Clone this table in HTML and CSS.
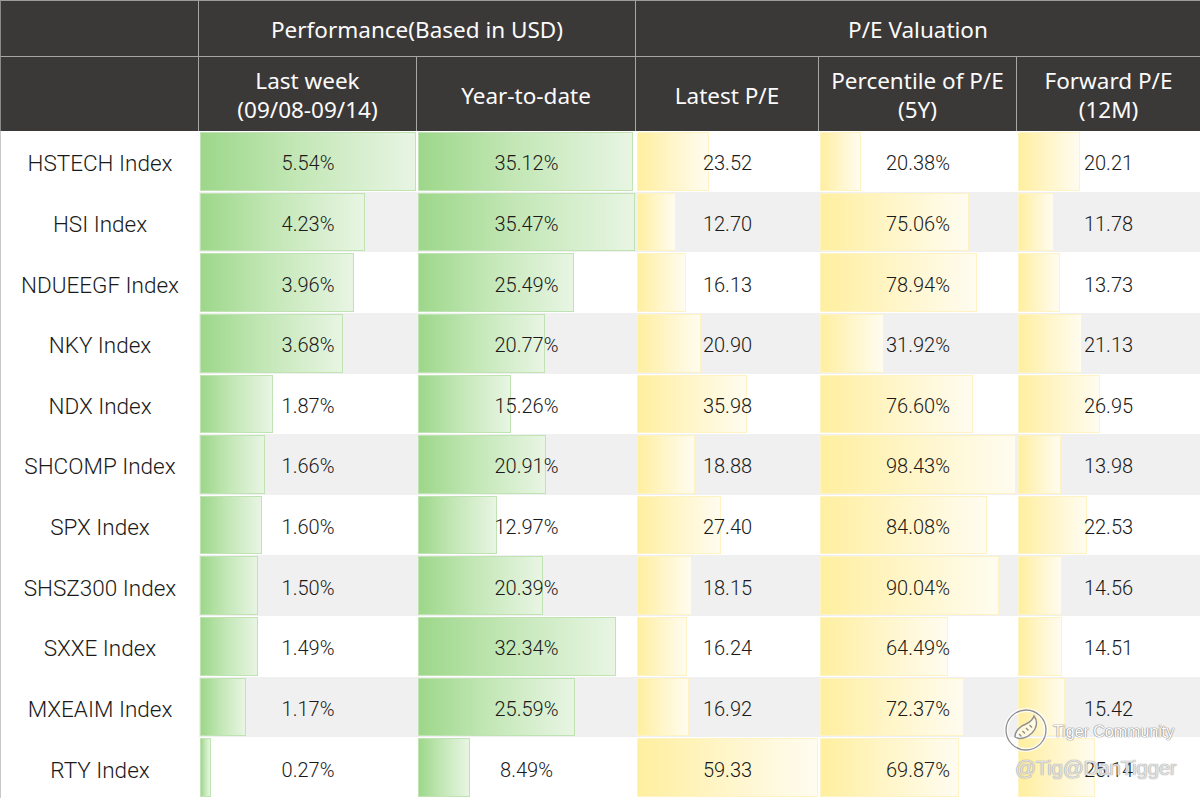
FILE: index.html
```html
<!DOCTYPE html>
<html>
<head>
<meta charset="utf-8">
<link rel="stylesheet" href="styles.css">
</head>
<body>
<div class="sheet">
  <div class="hd r1 c0"></div>
  <div class="hd r1 span2">Performance(Based in USD)</div>
  <div class="hd r1 span3 last">P/E Valuation</div>
  <div class="hd r2 c0"></div>
  <div class="hd r2">Last week<br>(09/08-09/14)</div>
  <div class="hd r2">Year-to-date</div>
  <div class="hd r2">Latest P/E</div>
  <div class="hd r2">Percentile of P/E<br>(5Y)</div>
  <div class="hd r2 last">Forward P/E<br>(12M)</div>

  <div class="row">
    <div class="name">HSTECH Index</div>
    <div class="cell"><span class="bar g" style="width:100%"></span><span class="val">5.54%</span></div>
    <div class="cell"><span class="bar g" style="width:99.01%"></span><span class="val">35.12%</span></div>
    <div class="cell"><span class="bar y" style="width:39.64%"></span><span class="val">23.52</span></div>
    <div class="cell"><span class="bar y" style="width:20.71%"></span><span class="val">20.38%</span></div>
    <div class="cell"><span class="bar y" style="width:34.06%"></span><span class="val">20.21</span></div>
  </div>
  <div class="row alt">
    <div class="name">HSI Index</div>
    <div class="cell"><span class="bar g" style="width:76.35%"></span><span class="val">4.23%</span></div>
    <div class="cell"><span class="bar g" style="width:100%"></span><span class="val">35.47%</span></div>
    <div class="cell"><span class="bar y" style="width:21.41%"></span><span class="val">12.70</span></div>
    <div class="cell"><span class="bar y" style="width:76.26%"></span><span class="val">75.06%</span></div>
    <div class="cell"><span class="bar y" style="width:19.86%"></span><span class="val">11.78</span></div>
  </div>
  <div class="row">
    <div class="name">NDUEEGF Index</div>
    <div class="cell"><span class="bar g" style="width:71.48%"></span><span class="val">3.96%</span></div>
    <div class="cell"><span class="bar g" style="width:71.86%"></span><span class="val">25.49%</span></div>
    <div class="cell"><span class="bar y" style="width:27.19%"></span><span class="val">16.13</span></div>
    <div class="cell"><span class="bar y" style="width:80.20%"></span><span class="val">78.94%</span></div>
    <div class="cell"><span class="bar y" style="width:23.14%"></span><span class="val">13.73</span></div>
  </div>
  <div class="row alt">
    <div class="name">NKY Index</div>
    <div class="cell"><span class="bar g" style="width:66.43%"></span><span class="val">3.68%</span></div>
    <div class="cell"><span class="bar g" style="width:58.56%"></span><span class="val">20.77%</span></div>
    <div class="cell"><span class="bar y" style="width:35.23%"></span><span class="val">20.90</span></div>
    <div class="cell"><span class="bar y" style="width:32.43%"></span><span class="val">31.92%</span></div>
    <div class="cell"><span class="bar y" style="width:35.61%"></span><span class="val">21.13</span></div>
  </div>
  <div class="row">
    <div class="name">NDX Index</div>
    <div class="cell"><span class="bar g" style="width:33.75%"></span><span class="val">1.87%</span></div>
    <div class="cell"><span class="bar g" style="width:43.02%"></span><span class="val">15.26%</span></div>
    <div class="cell"><span class="bar y" style="width:60.64%"></span><span class="val">35.98</span></div>
    <div class="cell"><span class="bar y" style="width:77.82%"></span><span class="val">76.60%</span></div>
    <div class="cell"><span class="bar y" style="width:45.42%"></span><span class="val">26.95</span></div>
  </div>
  <div class="row alt">
    <div class="name">SHCOMP Index</div>
    <div class="cell"><span class="bar g" style="width:29.96%"></span><span class="val">1.66%</span></div>
    <div class="cell"><span class="bar g" style="width:58.95%"></span><span class="val">20.91%</span></div>
    <div class="cell"><span class="bar y" style="width:31.82%"></span><span class="val">18.88</span></div>
    <div class="cell"><span class="bar y" style="width:100%"></span><span class="val">98.43%</span></div>
    <div class="cell"><span class="bar y" style="width:23.56%"></span><span class="val">13.98</span></div>
  </div>
  <div class="row">
    <div class="name">SPX Index</div>
    <div class="cell"><span class="bar g" style="width:28.88%"></span><span class="val">1.60%</span></div>
    <div class="cell"><span class="bar g" style="width:36.57%"></span><span class="val">12.97%</span></div>
    <div class="cell"><span class="bar y" style="width:46.18%"></span><span class="val">27.40</span></div>
    <div class="cell"><span class="bar y" style="width:85.42%"></span><span class="val">84.08%</span></div>
    <div class="cell"><span class="bar y" style="width:37.97%"></span><span class="val">22.53</span></div>
  </div>
  <div class="row alt">
    <div class="name">SHSZ300 Index</div>
    <div class="cell"><span class="bar g" style="width:27.08%"></span><span class="val">1.50%</span></div>
    <div class="cell"><span class="bar g" style="width:57.49%"></span><span class="val">20.39%</span></div>
    <div class="cell"><span class="bar y" style="width:30.59%"></span><span class="val">18.15</span></div>
    <div class="cell"><span class="bar y" style="width:91.48%"></span><span class="val">90.04%</span></div>
    <div class="cell"><span class="bar y" style="width:24.54%"></span><span class="val">14.56</span></div>
  </div>
  <div class="row">
    <div class="name">SXXE Index</div>
    <div class="cell"><span class="bar g" style="width:26.90%"></span><span class="val">1.49%</span></div>
    <div class="cell"><span class="bar g" style="width:91.18%"></span><span class="val">32.34%</span></div>
    <div class="cell"><span class="bar y" style="width:27.37%"></span><span class="val">16.24</span></div>
    <div class="cell"><span class="bar y" style="width:65.52%"></span><span class="val">64.49%</span></div>
    <div class="cell"><span class="bar y" style="width:24.46%"></span><span class="val">14.51</span></div>
  </div>
  <div class="row alt">
    <div class="name">MXEAIM Index</div>
    <div class="cell"><span class="bar g" style="width:21.12%"></span><span class="val">1.17%</span></div>
    <div class="cell"><span class="bar g" style="width:72.15%"></span><span class="val">25.59%</span></div>
    <div class="cell"><span class="bar y" style="width:28.52%"></span><span class="val">16.92</span></div>
    <div class="cell"><span class="bar y" style="width:73.52%"></span><span class="val">72.37%</span></div>
    <div class="cell"><span class="bar y" style="width:25.99%"></span><span class="val">15.42</span></div>
  </div>
  <div class="row">
    <div class="name">RTY Index</div>
    <div class="cell"><span class="bar g" style="width:4.87%"></span><span class="val">0.27%</span></div>
    <div class="cell"><span class="bar g" style="width:23.94%"></span><span class="val">8.49%</span></div>
    <div class="cell"><span class="bar y" style="width:100%"></span><span class="val">59.33</span></div>
    <div class="cell"><span class="bar y" style="width:70.98%"></span><span class="val">69.87%</span></div>
    <div class="cell"><span class="bar y" style="width:42.37%"></span><span class="val">25.14</span></div>
  </div>
</div>

<div class="watermark">
  <div class="wm-top">
    <svg class="wm-logo" width="46" height="46" viewBox="0 0 46 46">
      <circle cx="23" cy="23" r="20" fill="none" stroke="#ffffff" stroke-width="4" opacity="0.85"/>
      <circle cx="23" cy="23" r="20" fill="none" stroke="#8f8f8f" stroke-width="1.3"/>
      <path d="M12 30 C12 24 17 19 23 17 C27 15 30 12 31 9 C35 14 34 21 29 26 C24 31 17 33 12 30 Z" fill="rgba(255,255,255,0.6)" stroke="#8f8f8f" stroke-width="1.4"/>
      <path d="M16 27 L18.5 29.5 M19.5 24 L22 26.5 M23 21 L25.5 23.5 M26.5 18 L29 20.5" stroke="#8f8f8f" stroke-width="1.4"/>
    </svg>
    <span class="wm-title">Tiger Community</span>
  </div>
  <div class="wm-handle">@Tig@DanTigger</div>
</div>
</body>
</html>
```
FILE: styles.css
```css
html, body {
  margin: 0;
  padding: 0;
  background: #ffffff;
  overflow: hidden;
}

.sheet {
  display: grid;
  grid-template-columns: 199px 218px 219px 183px 198px 183px;
  grid-template-rows: 57px 74px repeat(11, 1fr);
  width: 1200px;
  height: 798px;
}

.hd {
  box-sizing: border-box;
  background: #3b3838;
  color: #fbfbfb;
  font-family: "Noto Sans", "Open Sans", sans-serif;
  font-weight: 400;
  font-size: 22.5px;
  line-height: 29px;
  display: flex;
  align-items: center;
  justify-content: center;
  text-align: center;
  border-right: 1px solid #a6a6a6;
}

.r1 {
  border-top: 1px solid #9c9c9c;
  border-bottom: 1px solid #a6a6a6;
  padding-top: 2px;
}

.r2 {
  padding-top: 2px;
}

.c0 {
  border-left: 1px solid #8a8a8a;
}

.span2 { grid-column: span 2; }
.span3 { grid-column: span 3; }
.last { border-right: none; }

.row {
  display: contents;
}

.name {
  box-sizing: border-box;
  background: #ffffff;
  border-left: 1px solid #c8c8c8;
  display: flex;
  align-items: center;
  justify-content: center;
  padding-top: 4px;
  font-family: Roboto, "Liberation Sans", sans-serif;
  font-weight: 300;
  font-size: 22.5px;
  color: #1a1a1a;
}

.cell {
  box-sizing: border-box;
  display: grid;
  padding: 1px;
  background: #ffffff;
  min-height: 0;
}

.alt .cell {
  background: #f0f0f0;
}

.bar {
  grid-area: 1 / 1;
  justify-self: start;
  align-self: stretch;
  box-sizing: border-box;
}

.bar.g {
  background: linear-gradient(90deg, #9dd78a 0%, #c3e7b6 45%, #e8f5e3 100%);
  border: 1px solid #bfe3b2;
}

.bar.y {
  background: linear-gradient(90deg, #ffef9f 0%, #fff5c6 45%, #fffcf0 100%);
  border: 1px solid #fff3c4;
}

.val {
  grid-area: 1 / 1;
  place-self: center;
  padding-top: 4px;
  position: relative;
  font-family: Roboto, "Liberation Sans", sans-serif;
  font-weight: 300;
  font-size: 20px;
  color: #1a1a1a;
}

.watermark {
  position: absolute;
  left: 1003px;
  top: 707px;
  width: 195px;
  pointer-events: none;
}

.wm-top {
  display: flex;
  align-items: center;
  gap: 4px;
}

.wm-title {
  font-family: "Liberation Sans", sans-serif;
  font-size: 16px;
  color: #ffffff;
  margin-top: 4px;
  text-shadow: 0 0 1px #858585, 0 0 1px #858585, 0 0 1px #858585;
}

.wm-handle {
  margin-top: 3px;
  margin-left: 12px;
  font-family: "Liberation Sans", sans-serif;
  font-size: 21px;
  color: rgba(255, 255, 255, 0.7);
  text-shadow: 0 0 1px #9a9a9a, 0 0 1px #9a9a9a;
  letter-spacing: -0.5px;
}
```
